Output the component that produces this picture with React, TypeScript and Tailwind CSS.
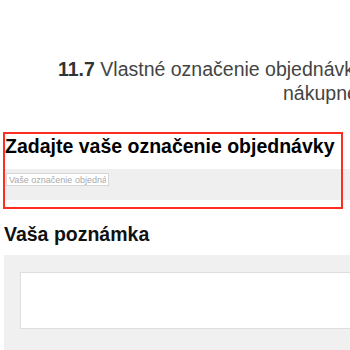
export default function App() {
  return (
    <div className="relative w-[350px] h-[350px] overflow-hidden bg-white font-['Liberation_Sans',Arial,sans-serif]">
      <div className="pt-[57px] text-[19.5px] leading-[24px] text-[#444] whitespace-nowrap">
        <div className="pl-[58px]">
          <span className="font-bold text-[#333]">11.7</span> Vlastné označenie objednávky a poznámka
        </div>
        <div className="pl-[283px]">nákupného košíka</div>
      </div>

      <div className="mt-[30px] pl-[5px]">
        <h2 className="text-[19.5px] leading-[23px] font-bold text-black whitespace-nowrap">
          Zadajte vaše označenie objednávky
        </h2>
        <div className="mt-[11px] h-[31px] bg-[#efefef] pt-[4px] pl-[1px]">
          <input
            type="text"
            placeholder="Vaše označenie objednávky"
            className="block w-[103px] h-[13px] bg-white border border-[#d6d6d6] px-[2px] text-[9px] leading-[11px] text-[#333] placeholder:text-[#a9a9a9] outline-none"
          />
        </div>
      </div>

      <div className="mt-[23px] pl-[4px]">
        <h2 className="text-[19.5px] leading-[23px] font-bold text-[#111] whitespace-nowrap">Vaša poznámka</h2>
        <div className="mt-[9px] h-[120px] bg-[#f0f0f0] pt-[17px] pl-[16px]">
          <textarea className="block w-[360px] h-[57px] bg-white border border-[#dedede] resize-none outline-none" />
        </div>
      </div>

      <div className="absolute left-[3px] top-[132px] w-[340px] h-[77px] border-2 border-[#ff2d1f] pointer-events-none" />
    </div>
  );
}
